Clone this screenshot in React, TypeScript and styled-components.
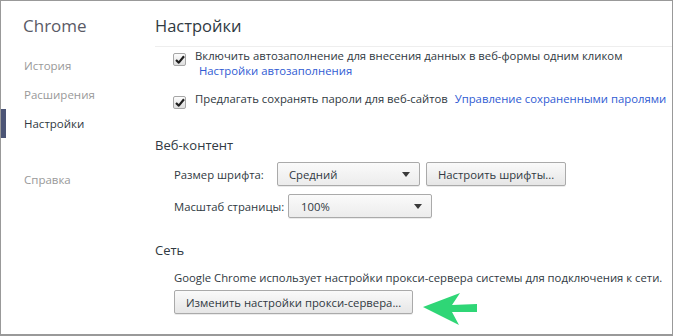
import React from 'react';
import styled, { createGlobalStyle } from 'styled-components';

const GlobalStyle = createGlobalStyle`
  html, body {
    margin: 0;
    padding: 0;
    background: #fff;
  }
  body {
    font-family: "Open Sans", "Noto Sans", sans-serif;
  }
`;

const Frame = styled.div`
  width: 673px;
  height: 336px;
  box-sizing: border-box;
  border: 1px solid #999;
  border-bottom-width: 2px;
  display: flex;
  overflow: hidden;
  background: #fff;
  color: #303942;
`;

const Sidebar = styled.nav`
  width: 154px;
  flex-shrink: 0;
  display: flex;
  flex-direction: column;
`;

const Brand = styled.div`
  margin: 11px 0 0 22px;
  height: 28px;
  line-height: 28px;
  font-size: 17px;
  color: #5a5a66;
`;

const NavList = styled.div`
  margin-top: 11px;
  display: flex;
  flex-direction: column;
`;

const NavItem = styled.div<{ $active?: boolean; $gap?: number }>`
  height: 29px;
  line-height: 29px;
  font-size: 11.5px;
  margin-top: ${(p) => p.$gap ?? 0}px;
  box-sizing: border-box;
  padding-left: ${(p) => (p.$active ? 18 : 23)}px;
  border-left: ${(p) => (p.$active ? '5px solid #4c5576' : 'none')};
  color: ${(p) => (p.$active ? '#303942' : '#999')};
`;

const Main = styled.main`
  flex: 1;
  display: flex;
  flex-direction: column;
`;

const PageTitle = styled.h1`
  margin: 11px 0 0;
  height: 34px;
  line-height: 28px;
  font-size: 16.5px;
  font-weight: normal;
  border-bottom: 1px solid #eee;
`;

const Rows = styled.div`
  display: flex;
  flex-direction: column;
  padding-left: 18px;
  font-size: 11.3px;
  line-height: 15px;
`;

const CheckRow = styled.div<{ $top: number }>`
  display: flex;
  align-items: flex-start;
  margin-top: ${(p) => p.$top}px;
  white-space: nowrap;
`;

const Box = styled.span`
  width: 13px;
  height: 13px;
  box-sizing: border-box;
  margin-top: 5px;
  margin-right: 9px;
  flex-shrink: 0;
  border: 1px solid #a6a6a6;
  border-radius: 2px;
  background: linear-gradient(#fdfdfd, #dedede);
  display: flex;
  align-items: center;
  justify-content: center;
`;

const Link = styled.a<{ $indent?: number }>`
  color: #2f5bd3;
  text-decoration: none;
  margin-left: ${(p) => p.$indent ?? 0}px;
`;

const SectionTitle = styled.h3<{ $top: number }>`
  margin: ${(p) => p.$top}px 0 0;
  font-size: 13px;
  font-weight: normal;
  line-height: 20px;
  height: 20px;
`;

const SectionBody = styled.div`
  padding-left: 19px;
  display: flex;
  flex-direction: column;
  font-size: 11.3px;
  line-height: 15px;
  white-space: nowrap;
`;

const FieldRow = styled.div<{ $top: number }>`
  display: flex;
  align-items: center;
  gap: 6px;
  margin-top: ${(p) => p.$top}px;
`;

const FieldLabel = styled.span<{ $w: number }>`
  width: ${(p) => p.$w}px;
  flex-shrink: 0;
`;

const Select = styled.div<{ $w: number; $pad: number }>`
  width: ${(p) => p.$w}px;
  height: 24px;
  box-sizing: border-box;
  padding: 0 9px 0 ${(p) => p.$pad}px;
  border: 1px solid #aaa;
  border-radius: 2px;
  background: linear-gradient(#fafafa, #ececec);
  box-shadow: 0 1px 0 rgba(0, 0, 0, 0.08);
  display: flex;
  align-items: center;
  justify-content: space-between;
`;

const Caret = styled.span`
  width: 0;
  height: 0;
  border-left: 4.5px solid transparent;
  border-right: 4.5px solid transparent;
  border-top: 5px solid #3a3a3a;
`;

const Button = styled.button`
  height: 24px;
  box-sizing: border-box;
  padding: 0 11px;
  border: 1px solid #aaa;
  border-radius: 2px;
  background: linear-gradient(#fafafa, #e6e6e6);
  box-shadow: 0 1px 0 rgba(0, 0, 0, 0.08);
  font-family: inherit;
  font-size: 11.3px;
  color: #303942;
  display: flex;
  align-items: center;
  white-space: nowrap;
`;

const Note = styled.div`
  margin-top: 10px;
`;

const ProxyRow = styled.div`
  display: flex;
  align-items: flex-start;
  margin-top: 5px;
  gap: 10px;
`;

const Arrow = styled.svg`
  width: 56px;
  height: 36px;
  margin-top: 1px;
  flex-shrink: 0;
`;

const Check = () => (
  <svg width="10" height="9" viewBox="0 0 10 9">
    <path d="M1 5 L3.8 7.6 L9 1.2" fill="none" stroke="#1f1f1f" strokeWidth="2.2" strokeLinejoin="round" />
  </svg>
);

export default function App() {
  return (
    <>
      <GlobalStyle />
      <Frame>
        <Sidebar>
          <Brand>Chrome</Brand>
          <NavList>
            <NavItem>История</NavItem>
            <NavItem>Расширения</NavItem>
            <NavItem $active>Настройки</NavItem>
            <NavItem $gap={27}>Справка</NavItem>
          </NavList>
        </Sidebar>
        <Main>
          <PageTitle>Настройки</PageTitle>
          <Rows>
            <CheckRow $top={1}>
              <Box><Check /></Box>
              <div>
                Включить автозаполнение для внесения данных в веб-формы одним кликом
                <br />
                <Link href="#" $indent={4}>Настройки автозаполнения</Link>
              </div>
            </CheckRow>
            <CheckRow $top={13}>
              <Box><Check /></Box>
              <div>
                Предлагать сохранять пароли для веб-сайтов{' '}
                <Link href="#" $indent={4}>Управление сохраненными паролями</Link>
              </div>
            </CheckRow>
          </Rows>
          <SectionTitle $top={26}>Веб-контент</SectionTitle>
          <SectionBody>
            <FieldRow $top={7}>
              <FieldLabel $w={97}>Размер шрифта:</FieldLabel>
              <Select $w={143} $pad={11}>Средний<Caret /></Select>
              <Button>Настроить шрифты...</Button>
            </FieldRow>
            <FieldRow $top={8}>
              <FieldLabel $w={108}>Масштаб страницы:</FieldLabel>
              <Select $w={144} $pad={12}>100%<Caret /></Select>
            </FieldRow>
          </SectionBody>
          <SectionTitle $top={22}>Сеть</SectionTitle>
          <SectionBody>
            <Note>Google Chrome использует настройки прокси-сервера системы для подключения к сети.</Note>
            <ProxyRow>
              <Button>Изменить настройки прокси-сервера...</Button>
              <Arrow viewBox="0 0 56 36">
                <path d="M0 16 L37 2 L29 14 L54 13 L54 21 L29 21 L36 34 Z" fill="#2fd676" />
              </Arrow>
            </ProxyRow>
          </SectionBody>
        </Main>
      </Frame>
    </>
  );
}
